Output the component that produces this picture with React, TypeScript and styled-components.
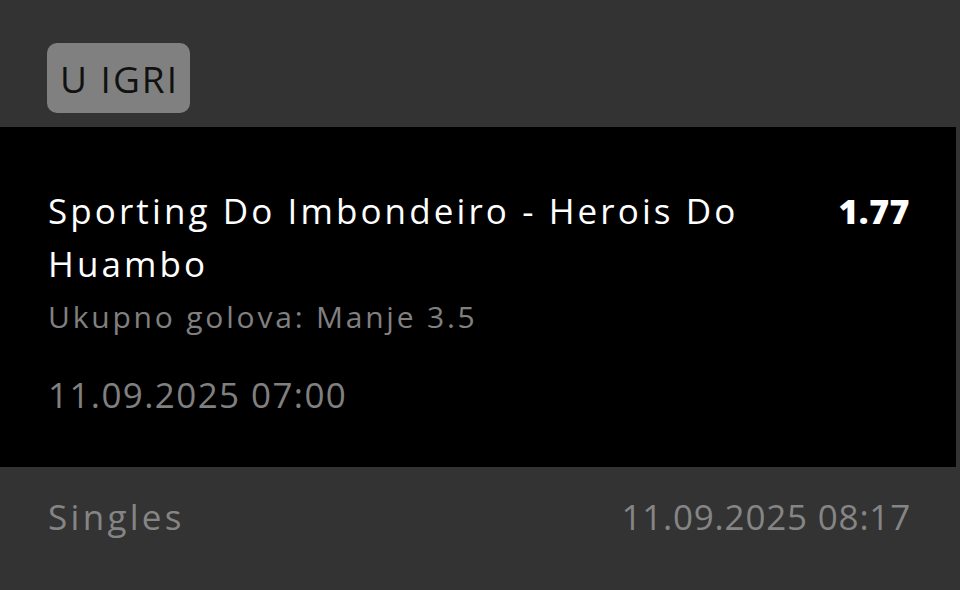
import React from "react";
import styled, { createGlobalStyle } from "styled-components";

const Global = createGlobalStyle`
  html, body { margin: 0; padding: 0; background: #333333; }
  body { font-family: "Open Sans", "Liberation Sans", sans-serif; }
`;

const Page = styled.div`
  width: 960px;
  height: 590px;
  background: #333333;
  display: flex;
  flex-direction: column;
  overflow: hidden;
`;

const Header = styled.div`
  height: 127px;
  box-sizing: border-box;
  padding: 43px 0 0 47px;
`;

const Badge = styled.div`
  display: inline-flex;
  align-items: center;
  justify-content: center;
  height: 70px;
  width: 143px;
  box-sizing: border-box;
  border-radius: 10px;
  background: #808080;
  color: #111111;
  font-size: 37px;
  letter-spacing: 2px;
  padding-left: 2px;
`;

const Panel = styled.div`
  width: 956px;
  height: 340px;
  box-sizing: border-box;
  background: #000000;
  padding: 57px 46px 0 48px;
  display: flex;
  flex-direction: column;
`;

const TopRow = styled.div`
  display: flex;
  justify-content: space-between;
  align-items: flex-start;
  gap: 40px;
`;

const Title = styled.div`
  color: #ffffff;
  font-size: 35px;
  line-height: 53px;
  letter-spacing: 3.1px;
  max-width: 730px;
`;

const Odds = styled.div`
  color: #ffffff;
  font-size: 34px;
  line-height: 53px;
  font-weight: 800;
  letter-spacing: 0.5px;
  padding-top: 1px;
`;

const Market = styled.div`
  color: #808080;
  font-size: 30px;
  line-height: 40px;
  margin-top: 7px;
  letter-spacing: 2.8px;
`;

const EventTime = styled.div`
  color: #808080;
  font-size: 35px;
  line-height: 50px;
  margin-top: 33px;
  letter-spacing: 1.4px;
`;

const Footer = styled.div`
  display: flex;
  justify-content: space-between;
  align-items: center;
  padding: 25px 50px 0 48px;
  color: #858585;
  font-size: 35px;
  line-height: 50px;
`;

const FooterLabel = styled.span`
  letter-spacing: 3.3px;
`;

const FooterDate = styled.span`
  letter-spacing: 0.8px;
  margin-right: -1px;
`;

export default function App() {
  return (
    <>
      <Global />
      <Page>
        <Header>
          <Badge>U IGRI</Badge>
        </Header>
        <Panel>
          <TopRow>
            <Title>Sporting Do Imbondeiro - Herois Do Huambo</Title>
            <Odds>1.77</Odds>
          </TopRow>
          <Market>Ukupno golova: Manje 3.5</Market>
          <EventTime>11.09.2025 07:00</EventTime>
        </Panel>
        <Footer>
          <FooterLabel>Singles</FooterLabel>
          <FooterDate>11.09.2025 08:17</FooterDate>
        </Footer>
      </Page>
    </>
  );
}
